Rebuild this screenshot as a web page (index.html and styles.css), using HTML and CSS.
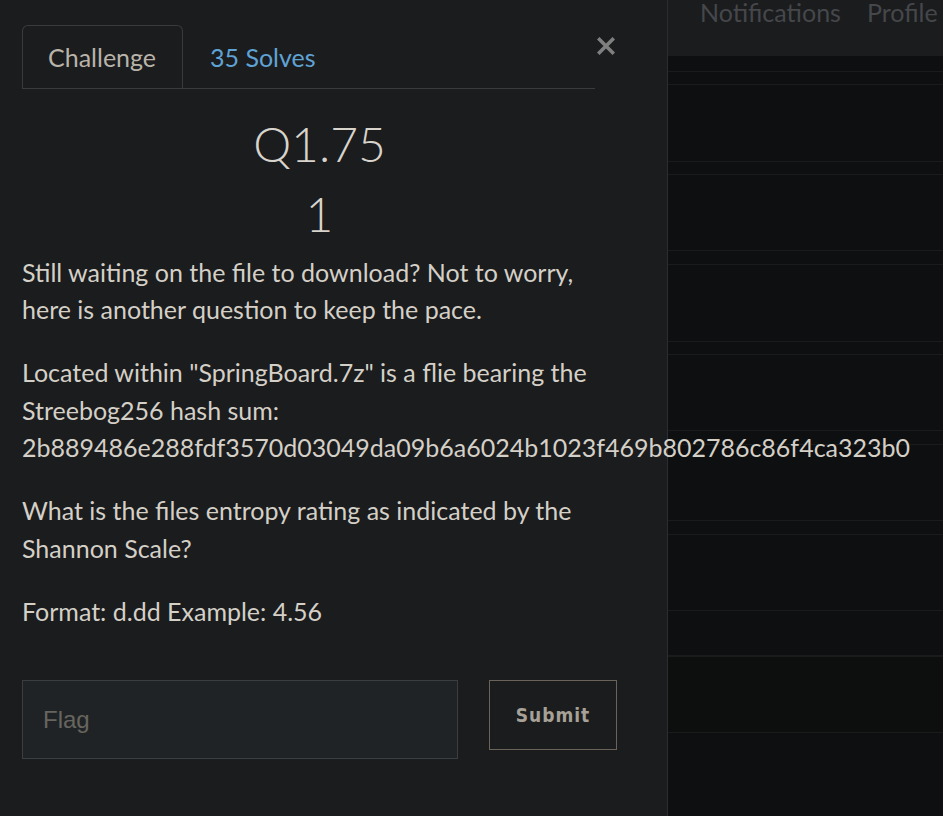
FILE: index.html
```html
<!DOCTYPE html>
<html lang="en">
<head>
<meta charset="utf-8">
<title>Challenge</title>
<link rel="stylesheet" href="styles.css">
</head>
<body>
<div class="screen">
  <section class="modal">
    <div class="modal-head">
      <ul class="tabs">
        <li class="tab active">Challenge</li>
        <li class="tab link">35 Solves</li>
      </ul>
      <button class="close" aria-label="Close">
        <svg width="18" height="18" viewBox="0 0 18 18"><path d="M2.5 2.5 L15.5 15.5 M15.5 2.5 L2.5 15.5" stroke="#7f7f7f" stroke-width="3.6" stroke-linecap="square" fill="none"/></svg>
      </button>
    </div>
    <h3 class="ch-name">Q1.75</h3>
    <h4 class="ch-value">1</h4>
    <div class="desc">
      <p>Still waiting on the file to download? Not to worry, here is another question to keep the pace.</p>
      <p>Located within "SpringBoard.7z" is a flie bearing the Streebog256 hash sum: 2b889486e288fdf3570d03049da09b6a6024b1023f469b802786c86f4ca323b0</p>
      <p>What is the files entropy rating as indicated by the Shannon Scale?</p>
      <p>Format: d.dd Example: 4.56</p>
    </div>
    <form class="submit-row">
      <input class="flag" type="text" placeholder="Flag">
      <button class="submit" type="button">Submit</button>
    </form>
  </section>
  <main class="page">
    <nav class="topnav">
      <span class="nav-item">Notifications</span>
      <span class="nav-item">Profile</span>
    </nav>
    <div class="rows">
      <div class="r h15"></div>
      <div class="r h12"></div>
      <div class="r h76"></div>
      <div class="r h12"></div>
      <div class="r h75"></div>
      <div class="r h13"></div>
      <div class="r h76"></div>
      <div class="r h12"></div>
      <div class="r h75"></div>
      <div class="r h13"></div>
      <div class="r h75"></div>
      <div class="r h13"></div>
      <div class="r h75"></div>
      <div class="r h45 thick"></div>
      <div class="r h76 green"></div>
      <div class="r rest"></div>
    </div>
  </main>
</div>
</body>
</html>
```

FILE: styles.css
```css
* { box-sizing: border-box; }
html, body { margin: 0; padding: 0; }
body {
  width: 943px;
  height: 816px;
  overflow: hidden;
  background: #0e0f11;
  font-family: "Lato", "Open Sans", sans-serif;
  color: #d4d0c7;
}
.screen {
  display: flex;
  height: 816px;
}
.modal {
  position: relative;
  z-index: 2;
  flex: 0 0 668px;
  height: 816px;
  background: #1b1c1e;
  border-right: 1px solid #2c2d30;
  padding: 25px 0 0 22px;
}
.modal-head {
  display: flex;
  align-items: flex-start;
}
.tabs {
  list-style: none;
  margin: 0;
  padding: 0;
  display: flex;
  width: 573px;
  border-bottom: 1px solid #3a3b3e;
}
.tab {
  font-size: 25px;
  line-height: 38.4px;
  padding: 12px 26px 12px 25px;
  border: 1px solid transparent;
  border-bottom: 0;
  border-radius: 6px 6px 0 0;
}
.tab.active {
  color: #b9b3a9;
  border-color: #3a3b3e;
}
.tab.link {
  color: #5fa3d5;
  padding-left: 26px;
}
.close {
  margin: 12px 0 0 2px;
  padding: 0;
  border: 0;
  background: none;
  width: 18px;
  height: 18px;
  display: flex;
}
.ch-name {
  margin: 26px 0 0;
  width: 595px;
  text-align: center;
  font-size: 48px;
  line-height: 57.6px;
  font-weight: 300;
  color: #d8d4cc;
}
.ch-value {
  margin: 12px 0 0;
  width: 595px;
  text-align: center;
  font-size: 48px;
  line-height: 57.6px;
  font-weight: 300;
  color: #d8d4cc;
}
.desc {
  width: 573px;
  margin-top: 11px;
  font-size: 25px;
  line-height: 37.5px;
}
.desc p {
  margin: 0 0 25.5px;
}
.submit-row {
  display: flex;
  align-items: flex-start;
  gap: 31px;
  margin-top: 50px;
}
.flag {
  width: 436px;
  height: 79px;
  background: #202326;
  border: 1px solid #3b3e41;
  padding: 0 20px;
  font-family: "Liberation Sans", Arial, sans-serif;
  font-size: 24px;
  color: #d4d0c7;
  outline: none;
}
.flag::placeholder { color: #67655e; }
.submit {
  width: 128px;
  height: 70px;
  background: transparent;
  border: 1px solid #6b6259;
  color: #a7a197;
  font-family: "DejaVu Sans Condensed", "DejaVu Sans", sans-serif;
  font-weight: bold;
  font-size: 19px;
  letter-spacing: 1px;
  padding: 0;
}
.page {
  flex: 1;
  display: flex;
  flex-direction: column;
  overflow: hidden;
}
.topnav {
  height: 56px;
  background: #1b1c1e;
  display: flex;
  gap: 26px;
  padding-left: 32px;
  white-space: nowrap;
}
.nav-item {
  font-size: 25px;
  line-height: 24px;
  color: #45474b;
}
.rows { display: flex; flex-direction: column; flex: 1; }
.r { border-bottom: 1px solid #1a1b1d; flex: none; }
.h15 { height: 16px; }
.h12 { height: 13px; }
.h13 { height: 14px; }
.h75 { height: 76px; }
.h76 { height: 77px; }
.h45 { height: 46px; }
.thick { border-bottom-width: 2px; height: 46px; }
.green { background: #0d0f0e; height: 76px; }
.rest { border-bottom: 0; flex: 1; }
```
